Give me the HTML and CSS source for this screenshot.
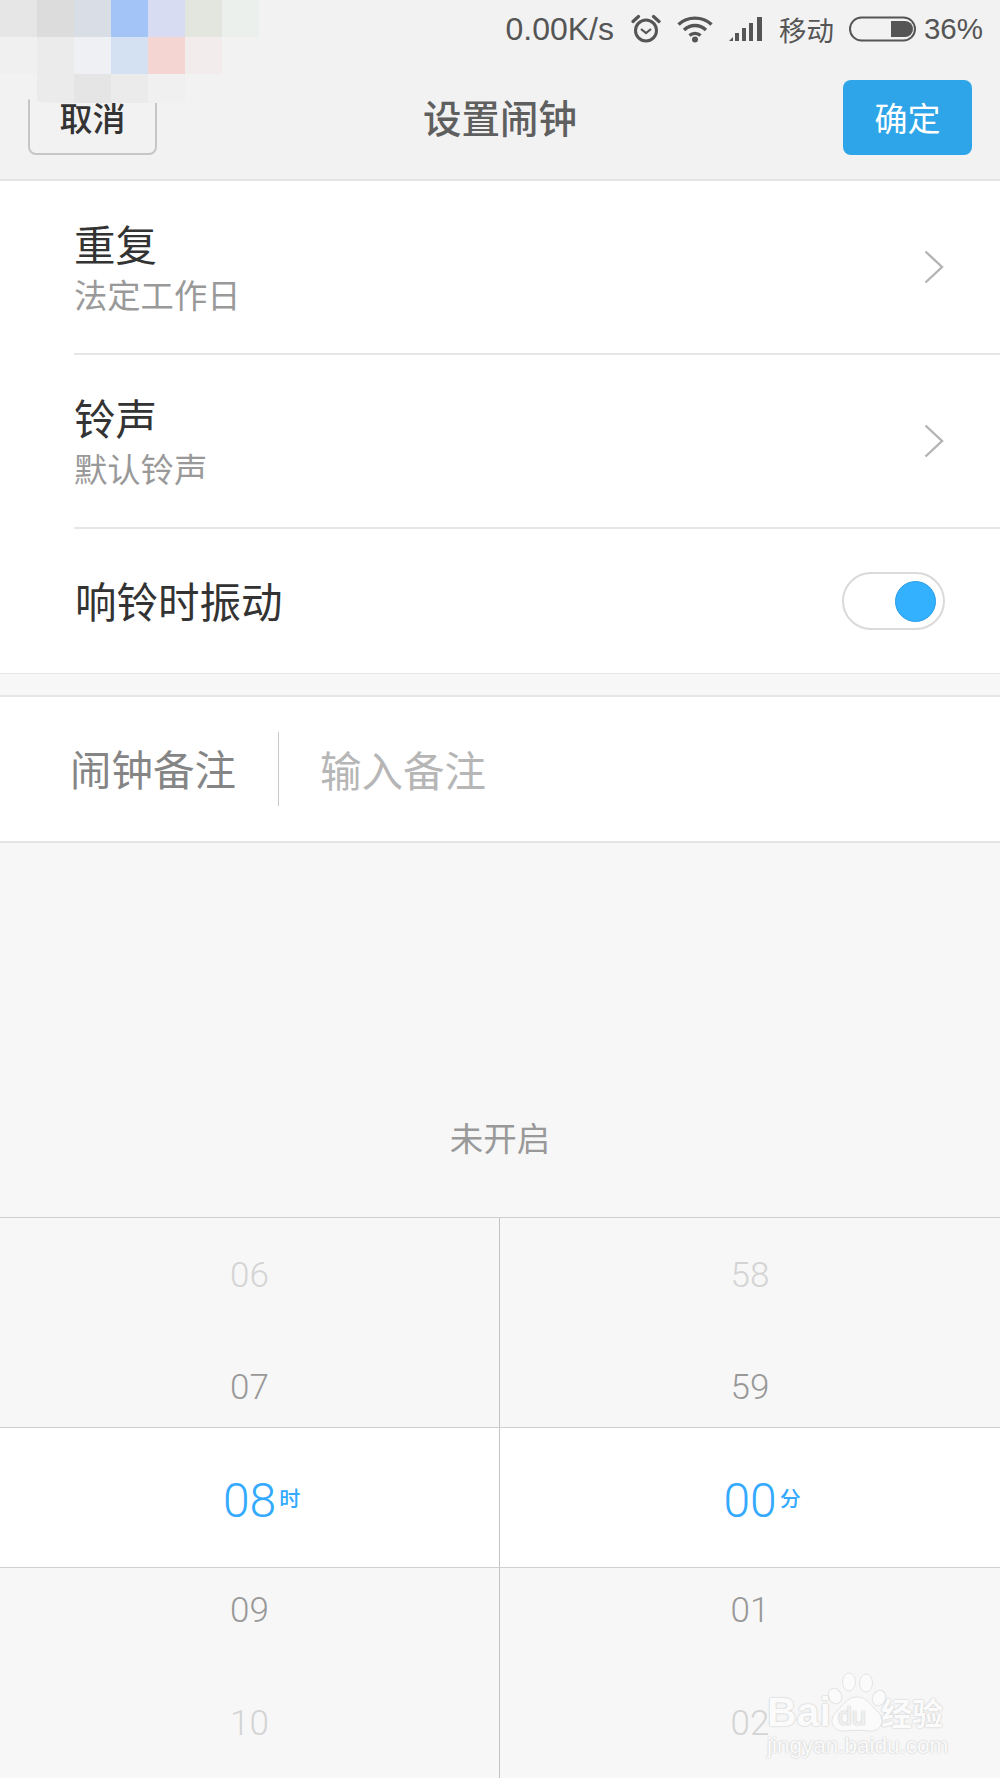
FILE: index.html
```html
<!DOCTYPE html>
<html lang="zh-CN">
<head>
    <meta charset="utf-8">
    <title>设置闹钟</title>
    <link rel="stylesheet" href="styles.css">
</head>
<body>
    <div class="phone">
        <!-- cabecalho -->
        <div class="top">
            <div class="status">
                <span class="speed">0.00K/s</span>
                <svg class="ic-alarm" width="30" height="30" viewBox="0 0 30 30">
                    <circle cx="15" cy="16.500" r="10.500" fill="none" stroke="#555" stroke-width="3"/>
                    <path d="M10 15l5 4 5-4" fill="none" stroke="#555" stroke-width="2.200"/>
                    <path d="M2 7.500L7.500 2.500M28 7.500L22.500 2.500" fill="none" stroke="#555" stroke-width="3.200" stroke-linecap="round"/>
                </svg>
                <svg class="ic-wifi" width="36" height="28" viewBox="0 0 36 28">
                    <path d="M1.500 9.500C10.500 1 25.500 1 34.500 9.500M7 15C13.500 9 22.500 9 29 15M12.500 20.500C15.500 17.700 20.500 17.700 23.500 20.500" fill="none" stroke="#555" stroke-width="3.400"/>
                    <circle cx="18" cy="24.500" r="3" fill="#555"/>
                </svg>
                <svg class="ic-signal" width="34" height="26" viewBox="0 0 34 26">
                    <path d="M0 25L4 21V25z" fill="#555"/>
                    <rect x="6" y="17" width="4" height="8" fill="#555"/>
                    <rect x="13" y="12" width="4" height="13" fill="#555"/>
                    <rect x="20" y="7" width="4" height="18" fill="#555"/>
                    <rect x="28" y="1" width="5" height="24" fill="#555"/>
                </svg>
                <span class="carrier">移动</span>
                <svg class="ic-battery" width="67" height="26" viewBox="0 0 67 26">
                    <rect x="1" y="1.500" width="65" height="23" rx="11.500" fill="none" stroke="#555" stroke-width="2"/>
                    <path d="M42 5h14a8 8 0 0 1 0 16H42z" fill="#555"/>
                </svg>
                <span class="percent">36%</span>
            </div>
            <div class="nav">
                <button class="btn btn-cancel">取消</button>
                <div class="nav-title">设置闹钟</div>
                <button class="btn btn-ok">确定</button>
            </div>
        </div>

        <!-- lista -->
        <div class="list">
            <div class="row row-link">
                <div class="row-text">
                    <div class="row-title">重复</div>
                    <div class="row-sub">法定工作日</div>
                </div>
                <svg class="chevron" width="20" height="34" viewBox="0 0 20 34">
                    <path d="M1.500 1.500L18 17 1.500 32.500" fill="none" stroke="#b4b4b4" stroke-width="2.400"/>
                </svg>
            </div>
            <div class="row row-link">
                <div class="row-text">
                    <div class="row-title">铃声</div>
                    <div class="row-sub">默认铃声</div>
                </div>
                <svg class="chevron" width="20" height="34" viewBox="0 0 20 34">
                    <path d="M1.500 1.500L18 17 1.500 32.500" fill="none" stroke="#b4b4b4" stroke-width="2.400"/>
                </svg>
            </div>
            <div class="row row-last">
                <div class="row-title vibrate">响铃时振动</div>
                <div class="toggle"><div class="knob"></div></div>
            </div>
        </div>

        <div class="gap"></div>

        <div class="note">
            <div class="note-label">闹钟备注</div>
            <div class="note-input">输入备注</div>
        </div>

        <div class="state">未开启</div>

        <!-- seletor de hora -->
        <div class="picker">
            <div class="band band-up">
                <div class="cell">
                    <div class="num faint">06</div>
                    <div class="num dim">07</div>
                </div>
                <div class="cell">
                    <div class="num faint">58</div>
                    <div class="num dim">59</div>
                </div>
            </div>
            <div class="band band-mid">
                <div class="cell">
                    <div class="num active">08<span class="unit">时</span></div>
                </div>
                <div class="cell">
                    <div class="num active">00<span class="unit">分</span></div>
                </div>
            </div>
            <div class="band band-down">
                <div class="cell">
                    <div class="num dim">09</div>
                    <div class="num faint">10</div>
                </div>
                <div class="cell">
                    <div class="num dim">01</div>
                    <div class="num faint">02</div>
                </div>
            </div>
        </div>

        <!-- mosaico sobre o canto -->
        <div class="mosaic">
            <div class="p-a"></div><div class="p-b"></div><div class="p-c"></div><div class="p-d"></div><div class="p-e"></div><div class="p-f"></div><div class="p-g"></div>
            <div class="p-h"></div><div class="p-i"></div><div class="p-j"></div><div class="p-k"></div><div class="p-l"></div><div class="p-m"></div><div class="p-n"></div>
            <div class="p-n"></div><div class="p-i"></div><div class="p-o"></div><div class="p-i"></div><div class="p-h"></div><div class="p-n"></div><div class="p-n"></div>
        </div>

        <!-- marca d'agua -->
        <div class="mark">
            <svg class="mark-paw" width="60" height="66" viewBox="0 0 60 66">
                <g fill="#fbfbfb" stroke="#e4e4e4" stroke-width="1">
                    <ellipse cx="8" cy="24" rx="6.500" ry="8" transform="rotate(-25 8 24)"/>
                    <ellipse cx="22" cy="10" rx="6.500" ry="9"/>
                    <ellipse cx="39" cy="11" rx="6.500" ry="9"/>
                    <ellipse cx="52" cy="26" rx="6.500" ry="8" transform="rotate(25 52 26)"/>
                    <path d="M30 25C40 25 44 34 50 39 60 48 54 60 42 59 34 58 26 58 18 59 6 60 0 48 10 39 16 34 20 25 30 25z"/>
                </g>
            </svg>
            <span class="mark-bai">Bai</span>
            <span class="mark-du">du</span>
            <span class="mark-jy">经验</span>
            <span class="mark-url">jingyan.baidu.com</span>
        </div>
    </div>
</body>
</html>
```

FILE: styles.css
```css
* {
    box-sizing: border-box;
}

body {
    margin: 0;
    font-family: "Liberation Sans", "Noto Sans CJK SC", sans-serif;
    background-color: #f7f7f7;
}

.phone {
    position: relative;
    width: 1000px;
    height: 1778px;
    overflow: hidden;
    background-color: #f7f7f7;
}

/* Cabecalho */
.top {
    height: 181px;
    background-color: #f2f2f2;
    border-bottom: 2px solid #e4e4e4;
}

.status {
    height: 80px;
    padding: 0 17px 22px 0;
    display: flex;
    justify-content: flex-end;
    align-items: center;
    color: #555;
    font-size: 30px;
}

.speed {
    font-size: 32px;
    margin-right: 17px;
}

.ic-alarm {
    margin-right: 16px;
}

.ic-wifi {
    margin-right: 16px;
}

.ic-signal {
    margin-right: 16px;
}

.carrier {
    font-size: 27.500px;
    margin-right: 15px;
}

.ic-battery {
    margin-right: 8px;
}

.percent {
    font-size: 29.500px;
}

.nav {
    height: 99px;
    padding: 0 28px;
    display: flex;
    justify-content: space-between;
    align-items: flex-start;
}

.btn {
    width: 129px;
    height: 75px;
    padding: 0 0 2px;
    font-family: inherit;
    font-size: 33px;
    border-radius: 8px;
    cursor: pointer;
}

.btn-cancel {
    background-color: transparent;
    border: 2px solid #c6c6c6;
    color: #333;
    font-weight: 500;
}

.btn-ok {
    background-color: #2fa5e9;
    border: none;
    color: #fff;
    font-weight: 400;
}

.nav-title {
    line-height: 79px;
    font-size: 38.500px;
    font-weight: 500;
    color: #5f5f5f;
}

/* Lista */
.list {
    background-color: #fff;
    padding-left: 74px;
}

.row {
    display: flex;
    justify-content: space-between;
    align-items: center;
    padding-right: 55px;
}

.row-link {
    height: 174px;
    border-bottom: 2px solid #e6e6e6;
}

.row-last {
    height: 144px;
}

.row-text {
    padding-top: 9px;
}

.row-title {
    font-size: 41.500px;
    line-height: 50px;
    color: #333;
}

.row-sub {
    font-size: 33.300px;
    line-height: 50px;
    color: #999;
}

.vibrate {
    margin: 6px 0 0 1px;
}

.chevron {
    margin-right: 1px;
}

.toggle {
    position: relative;
    width: 103px;
    height: 58px;
    background-color: #fff;
    border: 2px solid #dadada;
    border-radius: 29px;
}

.knob {
    position: absolute;
    top: 7px;
    right: 7px;
    width: 41px;
    height: 41px;
    background-color: #33b1ff;
    border: 1px solid #2b9ee6;
    border-radius: 50%;
}

.gap {
    height: 24px;
    border-top: 1px solid #e6e6e6;
    border-bottom: 2px solid #e6e6e6;
}

/* Nota */
.note {
    height: 146px;
    display: flex;
    align-items: center;
    padding-left: 70px;
    background-color: #fff;
    border-bottom: 2px solid #e4e4e4;
    font-size: 41.500px;
}

.note-label {
    width: 209px;
    height: 74px;
    line-height: 80px;
    color: #858585;
    border-right: 1px solid #c8c8c8;
}

.note-input {
    margin-left: 41px;
    color: #b6b6b6;
}

.state {
    height: 374px;
    padding-bottom: 56px;
    display: flex;
    justify-content: center;
    align-items: flex-end;
    font-size: 33.500px;
    color: #999;
}

/* Seletor */
.picker {
    border-top: 1px solid #cfcfcf;
}

.band {
    display: grid;
    grid-template-columns: 1fr 1fr;
}

.band-up {
    height: 209px;
}

.band-mid {
    height: 141px;
    background-color: #fff;
    border-top: 1px solid #cfcfcf;
    border-bottom: 1px solid #cfcfcf;
}

.band-down {
    height: 210px;
}

.cell {
    display: flex;
    flex-direction: column;
    align-items: center;
}

.cell:first-child {
    border-right: 1px solid #c4c4c4;
}

.band-up .cell {
    justify-content: flex-end;
    gap: 30px;
}

.band-mid .cell {
    justify-content: center;
}

.band-down .cell {
    gap: 31px;
}

.num {
    position: relative;
    height: 82px;
    line-height: 86px;
    font-family: Roboto, sans-serif;
    font-weight: 300;
    font-size: 35px;
}

.faint {
    color: #d4d4d4;
}

.dim {
    color: #999;
}

.active {
    line-height: 88px;
    font-size: 48px;
    color: #33aaff;
}

.unit {
    position: absolute;
    top: -4px;
    left: 100%;
    margin-left: 3px;
    line-height: 88px;
    font-family: "Noto Sans CJK SC", sans-serif;
    font-weight: 500;
    font-size: 21px;
    white-space: nowrap;
}

/* Mosaico */
.mosaic {
    position: absolute;
    top: 0;
    left: 0;
    display: grid;
    grid-template-columns: repeat(7, 37px);
    grid-template-rows: 37px 37px 29px;
    overflow: hidden;
    border-bottom-left-radius: 60px 24px;
}

.p-a { background-color: #e6e6e6; }
.p-b { background-color: #dcdcdc; }
.p-c { background-color: #d9dde6; }
.p-d { background-color: #a3c4f7; }
.p-e { background-color: #d7dcf3; }
.p-f { background-color: #e2e6df; }
.p-g { background-color: #ebf0ec; }
.p-h { background-color: #f0f0f0; }
.p-i { background-color: #ebebeb; }
.p-j { background-color: #eef0f3; }
.p-k { background-color: #d3e1f2; }
.p-l { background-color: #f4d5d2; }
.p-m { background-color: #f2ecec; }
.p-n { background-color: #f2f2f2; }
.p-o { background-color: #e5e5e5; }

.mosaic > div:nth-child(14),
.mosaic > div:nth-child(20),
.mosaic > div:nth-child(21) {
    background-color: transparent;
}

/* Marca d'agua */
.mark {
    position: absolute;
    top: 1670px;
    left: 766px;
    width: 184px;
    height: 92px;
    color: #fbfbfb;
    text-shadow: 0 0 2px rgba(0, 0, 0, 0.25);
}

.mark-paw {
    position: absolute;
    top: 2px;
    left: 61px;
}

.mark-bai {
    position: absolute;
    top: 19px;
    left: 1px;
    font-size: 41px;
    font-weight: bold;
    line-height: 46px;
}

.mark-du {
    position: absolute;
    top: 31px;
    left: 72px;
    font-size: 25px;
    line-height: 30px;
    color: #f0f0f0;
}

.mark-jy {
    position: absolute;
    top: 20px;
    left: 115px;
    font-family: "Noto Sans CJK SC", sans-serif;
    font-weight: bold;
    font-size: 31px;
    line-height: 44px;
    white-space: nowrap;
}

.mark-url {
    position: absolute;
    top: 62px;
    left: 1px;
    font-size: 22.500px;
    line-height: 28px;
    white-space: nowrap;
}
```
